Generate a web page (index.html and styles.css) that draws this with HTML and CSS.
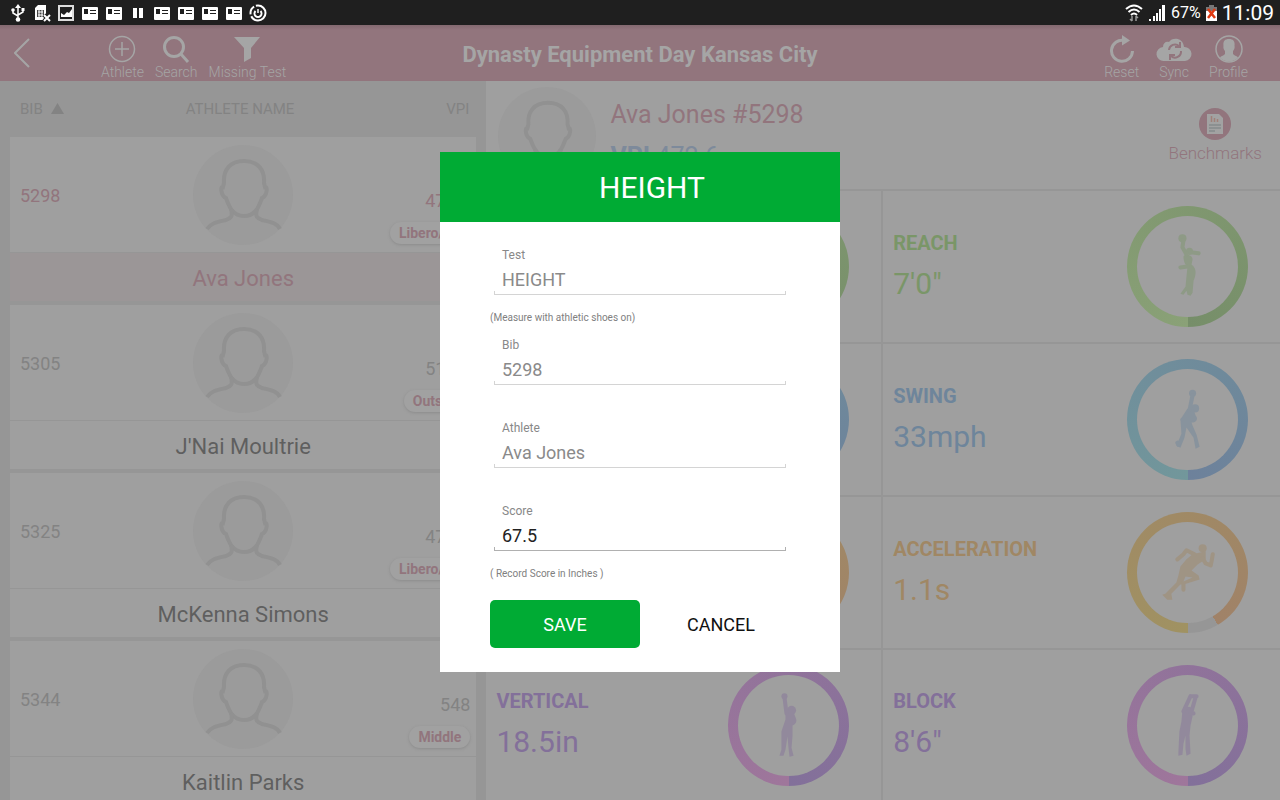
FILE: index.html
```
<!DOCTYPE html>
<html lang="en">
<head>
    <meta charset="UTF-8">
    <meta name="viewport" content="width=device-width, initial-scale=1">
    <title>Dynasty Equipment Day Kansas City</title>
    <link rel="stylesheet" href="styles.css">
</head>
<body>
    <!-- shared shapes -->
    <svg class="defs" width="0" height="0" aria-hidden="true">
        <symbol id="avatar" viewBox="0 0 100 100">
            <circle cx="50" cy="50" r="50" fill="#9b9b9b"/>
            <g fill="none" stroke="#919191" stroke-width="4">
                <path d="M51 16C37 16 30 25 31 38L30 42C27 41 28 51 33 53C36 61 39 71 51 71C63 71 66 61 69 53C74 51 75 41 72 42L71 38C72 25 65 16 51 16Z"/>
                <path d="M38 64C40 72 38 73 33 75C24 77 18 78 14 84M64 64C62 72 64 73 69 75C78 77 84 78 87 84"/>
            </g>
        </symbol>
        <symbol id="news" viewBox="0 0 18 18">
            <rect x="1" y="3" width="16" height="13" rx="1" fill="#fff"/>
            <path d="M3 5h4v5H3zM9 6h6v1H9zM9 9h6v1H9z" fill="#1f1f1f"/>
        </symbol>
    </svg>

    <div class="status-bar">
        <div class="status-icons">
            <svg viewBox="0 0 18 18"><path d="M9 3v12M4 6v3l5 3M14 5v3l-5 3" fill="none" stroke="#fff" stroke-width="1.5"/><path d="M9 0l3 4H6z" fill="#fff"/><circle cx="9" cy="15.500" r="2.300" fill="#fff"/><circle cx="4" cy="6" r="1.800" fill="#fff"/><path d="M12.500 4h3v3h-3z" fill="#fff"/></svg>
            <svg viewBox="0 0 18 18"><path d="M5 1h8v9l-1 6H2V4z" fill="#fff"/><path d="M4 6h7v7H4z" fill="#444"/><path d="M5 8h5M5 11h5M6 6v7M9 6v7" stroke="#fff"/><path d="M11 11l6 6M17 11l-6 6" stroke="#1f1f1f" stroke-width="4"/><path d="M11 11l6 6M17 11l-6 6" stroke="#fff" stroke-width="2"/></svg>
            <svg viewBox="0 0 18 18"><path d="M2 2h14v14H2z" fill="none" stroke="#ddd" stroke-width="2"/><path d="M4 13V9l3 2 3-3 2 1 3-4v8z" fill="#fff"/></svg>
            <svg><use href="#news"/></svg>
            <svg><use href="#news"/></svg>
            <svg viewBox="0 0 18 18"><path d="M4 4h4v10H4zM10 4h4v10h-4z" fill="#fff"/></svg>
            <svg><use href="#news"/></svg>
            <svg><use href="#news"/></svg>
            <svg><use href="#news"/></svg>
            <svg><use href="#news"/></svg>
            <svg viewBox="0 0 18 18" fill="none" stroke="#fff"><circle cx="9" cy="9" r="7.500" stroke-width="2" stroke-dasharray="20 2 9 2"/><path d="M6.500 7a3.500 3.500 0 1 0 5 0" stroke-width="2"/><path d="M9 5v4" stroke-width="1.500"/></svg>
        </div>
        <div class="status-info">
            <svg width="18" height="18" viewBox="0 0 18 18"><path d="M1 5q8-7 16 0M3.500 8q5.500-5 11 0M6 11q3-3 6 0" fill="none" stroke="#fff" stroke-width="2"/><path d="M7 12v5M5 15l2 2M11 17v-5M13 14l-2-2" fill="none" stroke="#999" stroke-width="1.500"/></svg>
            <svg width="18" height="18" viewBox="0 0 18 18" fill="#fff"><path d="M1 15h2v2H1zM5 12h2v5H5zM8 9h2v8H8zM11 5h2v12h-2zM14 1h3v16h-3z"/></svg>
            <span class="battery-level">67%</span>
            <svg width="11" height="18" viewBox="0 0 11 18"><path d="M3 1h5v2h3v4H0V3h3z" fill="#777"/><path d="M0 7h11v10H0z" fill="#fff"/><path d="M2 5l7 9M9 5l-7 9" stroke="#e03a12" stroke-width="2.500"/></svg>
            <span class="clock">11:09</span>
        </div>
    </div>

    <div class="app">
        <header class="toolbar">
            <nav class="tools">
                <button class="back" aria-label="Back">
                    <svg width="16" height="30" viewBox="0 0 16 30" fill="none" stroke="currentColor" stroke-width="2"><path d="M15 1L1 15l14 14"/></svg>
                </button>
                <button class="tool">
                    <svg width="28" height="28" viewBox="0 0 28 28" fill="none" stroke="currentColor"><circle cx="14" cy="14" r="12.500" stroke-width="1.500"/><path d="M14 7v14M7 14h14" stroke-width="1.500"/></svg>
                    Athlete
                </button>
                <button class="tool">
                    <svg width="28" height="28" viewBox="0 0 28 28" fill="none" stroke="currentColor" stroke-width="3"><circle cx="12" cy="12" r="9.500"/><path d="M18.500 18.500L26 27"/></svg>
                    Search
                </button>
                <button class="tool">
                    <svg width="28" height="28" viewBox="0 0 28 28" fill="currentColor"><path d="M1 2h26L18 13v10l-7 4V13z"/></svg>
                    Missing Test
                </button>
            </nav>
            <h1>Dynasty Equipment Day Kansas City</h1>
            <div class="tools tools-right">
                <button class="tool">
                    <svg width="28" height="28" viewBox="0 0 28 28"><path d="M16 5.500A10.500 10.500 0 1 0 24.500 16" fill="none" stroke="currentColor" stroke-width="3"/><path d="M14 0l8 5.500-8 5z" fill="currentColor"/></svg>
                    Reset
                </button>
                <button class="tool">
                    <svg width="36" height="28" viewBox="0 0 36 28"><path d="M8 26a7 7 0 0 1-1-14C7 8 10 6 13 7C16 2 27 2 28 12a7 7 0 0 1 1 14z" fill="currentColor"/><g fill="none" stroke="#92757d" stroke-width="2"><path d="M13 15a6 6 0 0 1 10-4M25 16a6 6 0 0 1-10 5"/><path d="M24 7v5h-5M14 25v-5h5"/></g></svg>
                    Sync
                </button>
                <button class="tool">
                    <svg width="28" height="28" viewBox="0 0 28 28"><circle cx="14" cy="14" r="13" fill="none" stroke="currentColor" stroke-width="1.500"/><path d="M14 4C9 4 8 7 8.500 11C8 13 9 15 10 16v3C8 21 6 21 5 22.500A12 12 0 0 0 23 22.500C22 21 20 21 18 19v-3C19 15 20 13 19.500 11C20 7 19 4 14 4Z" fill="currentColor"/></svg>
                    Profile
                </button>
            </div>
        </header>

        <main class="content">
            <section class="athletes">
                <div class="columns">
                    <span>BIB <svg width="13" height="11" viewBox="0 0 13 11"><path d="M6.500 0L13 11H0z" fill="currentColor"/></svg></span>
                    <span>ATHLETE NAME</span>
                    <span>VPI</span>
                </div>
                <ul class="cards">
                    <li class="card selected">
                        <div class="card-top">
                            <span class="bib">5298</span>
                            <svg class="photo"><use href="#avatar"/></svg>
                            <div class="score"><span>472.6</span><span class="badge">Libero/DS</span></div>
                        </div>
                        <div class="name">Ava Jones</div>
                    </li>
                    <li class="card">
                        <div class="card-top">
                            <span class="bib">5305</span>
                            <svg class="photo"><use href="#avatar"/></svg>
                            <div class="score"><span>510.2</span><span class="badge">Outside</span></div>
                        </div>
                        <div class="name">J'Nai Moultrie</div>
                    </li>
                    <li class="card">
                        <div class="card-top">
                            <span class="bib">5325</span>
                            <svg class="photo"><use href="#avatar"/></svg>
                            <div class="score"><span>474.1</span><span class="badge">Libero/DS</span></div>
                        </div>
                        <div class="name">McKenna Simons</div>
                    </li>
                    <li class="card">
                        <div class="card-top">
                            <span class="bib">5344</span>
                            <svg class="photo"><use href="#avatar"/></svg>
                            <div class="score"><span>548</span><span class="badge">Middle</span></div>
                        </div>
                        <div class="name">Kaitlin Parks</div>
                    </li>
                </ul>
            </section>

            <section class="detail">
                <div class="detail-head">
                    <svg class="photo"><use href="#avatar"/></svg>
                    <div class="who">
                        <h2>Ava Jones #5298</h2>
                        <p><b>VPI</b> 472.6</p>
                    </div>
                    <button class="benchmarks">
                        <svg width="34" height="34" viewBox="0 0 34 34"><circle cx="17" cy="17" r="16" fill="#92757d"/><path d="M9 7h12l4 4v16H9z" fill="#a2a2a2"/><path d="M13.500 9v6M16.500 11v4M19.500 12v3" stroke="#a08078" stroke-width="1.500"/><path d="M11 18h12M11 21h12M11 24h6" stroke="#858a8c" stroke-width="1.500"/></svg>
                        Benchmarks
                    </button>
                </div>

                <div class="tests">
                    <div class="test green"><div class="ring"><div class="ring-hole"></div></div></div>
                    <div class="test green">
                        <div class="result"><h3>REACH</h3><p>7'0"</p></div>
                        <div class="ring"><div class="ring-hole">
                            <svg class="figure" viewBox="0 0 100 100">
                                <circle cx="45" cy="22" r="4"/>
                                <circle cx="52" cy="35" r="3.500"/>
                                <path d="M46 40C47 37 55 38 55 43L54 48C60 52 58 60 56 64L55 76L53 79L50 78L49 74L46 78L43 77L48 70L49 60L50 50C47 48 46 43 46 40Z"/>
                                <path class="limb" d="M46 24L45 31L49 38M53 36L61 37M50 50L43 51"/>
                            </svg>
                        </div></div>
                    </div>
                    <div class="test blue"><div class="ring"><div class="ring-hole"></div></div></div>
                    <div class="test blue">
                        <div class="result"><h3>SWING</h3><p>33mph</p></div>
                        <div class="ring"><div class="ring-hole">
                            <svg class="figure" viewBox="0 0 100 100">
                                <circle cx="55" cy="24" r="3.500"/>
                                <circle cx="57.500" cy="39" r="4"/>
                                <path d="M50 39L56 40L58 46C61 49 59 53 54 53L55 56L59 65L62 77L58 79L56 68L49 58L47 68L43 78L39 76L44 64L43 50Z"/>
                                <path class="limb" d="M55 26L52 41M41 75L40 73M45 50L53 50"/>
                            </svg>
                        </div></div>
                    </div>
                    <div class="test orange"><div class="ring"><div class="ring-hole"></div></div></div>
                    <div class="test orange">
                        <div class="result"><h3>ACCELERATION</h3><p>1.1s</p></div>
                        <div class="ring ring-partial"><div class="ring-hole">
                            <svg class="figure" viewBox="0 0 100 100">
                                <circle cx="65" cy="26" r="4"/>
                                <path d="M55 32L68 29L68 37L60 42L54 48L61 53L62 57L46 62L43 62L34 71L35 77L30 77L25 72L28 71L39 60L41 53L43 44L49 37Z"/>
                                <path class="limb" d="M57 32L49 28L46 32L40 37M65 36L68 41L73 43L74 38L75 32M46 60L46 67"/>
                                <path d="M48 54L55 55L46 59Z" fill="#9f9f9f"/>
                            </svg>
                        </div></div>
                    </div>
                    <div class="test purple">
                        <div class="result"><h3>VERTICAL</h3><p>18.5in</p></div>
                        <div class="ring"><div class="ring-hole">
                            <svg class="figure" viewBox="0 0 100 100">
                                <circle cx="46" cy="21" r="3"/>
                                <circle cx="53" cy="35" r="4.500"/>
                                <path d="M47 34L55 37L57 42C59 46 57 49 54 50L54 60L53 72L55 80L51 81L50 72L49 61L47 74L45 80L41 80L43 74L43 56L47 44Z"/>
                                <path class="limb" d="M46 22L48 38"/>
                            </svg>
                        </div></div>
                    </div>
                    <div class="test purple">
                        <div class="result"><h3>BLOCK</h3><p>8'6"</p></div>
                        <div class="ring"><div class="ring-hole">
                            <svg class="figure" viewBox="0 0 100 100">
                                <circle cx="51" cy="35" r="3.500"/>
                                <path d="M45 35L54 34L55 41L53 50L52 60L53 78L49 80L48 73L48 60L46 68L45 79L41 80L41 76L42 56L44 46Z"/>
                                <path class="limb" d="M53 21L46 36M58 22L54 36M53 21L59 21M53 38L56 38"/>
                            </svg>
                        </div></div>
                    </div>
                </div>
            </section>
        </main>

        <div class="overlay">
            <form class="dialog" role="dialog" aria-labelledby="dialogTitle">
                <h2 class="dialog-title" id="dialogTitle">HEIGHT</h2>
                <div class="dialog-body">
                    <div class="field">
                        <label for="test">Test</label>
                        <input type="text" id="test" value="HEIGHT" readonly>
                    </div>
                    <p class="hint">(Measure with athletic shoes on)</p>
                    <div class="field spaced">
                        <label for="bib">Bib</label>
                        <input type="text" id="bib" value="5298" readonly>
                    </div>
                    <div class="field spaced">
                        <label for="athlete">Athlete</label>
                        <input type="text" id="athlete" value="Ava Jones" readonly>
                    </div>
                    <div class="field">
                        <label for="score">Score</label>
                        <input type="text" id="score" class="active" value="67.5" inputmode="decimal">
                    </div>
                    <p class="hint">( Record Score in Inches )</p>
                    <div class="actions">
                        <button type="button" class="save">SAVE</button>
                        <button type="button" class="cancel">CANCEL</button>
                    </div>
                </div>
            </form>
        </div>
    </div>
</body>
</html>
```
FILE: styles.css
```
* {
    box-sizing: border-box;
}

body {
    margin: 0;
    height: 100vh;
    display: flex;
    flex-direction: column;
    overflow: hidden;
    font-family: Roboto, Arial, sans-serif;
    background: #9f9f9f;
}

h1, h2, h3, p, ul {
    margin: 0;
    padding: 0;
}

button {
    padding: 0;
    border: none;
    background: none;
    font-family: inherit;
    cursor: pointer;
}

.defs {
    position: absolute;
}

/* status bar */
.status-bar {
    flex: none;
    height: 25px;
    padding: 0 6px 0 9px;
    display: flex;
    justify-content: space-between;
    align-items: center;
    background: #1f1f1f;
    color: #fff;
}

.status-icons,
.status-info {
    display: flex;
    align-items: center;
    gap: 6px;
}

.status-icons svg {
    width: 18px;
    height: 18px;
}

.status-info {
    gap: 5px;
}

.battery-level {
    font-size: 16px;
}

.clock {
    font-size: 21px;
    line-height: 24px;
}

/* toolbar */
.app {
    flex: 1;
    min-height: 0;
    position: relative;
    display: flex;
    flex-direction: column;
}

.toolbar {
    flex: none;
    height: 56px;
    padding: 0 14px;
    display: grid;
    grid-template-columns: 1fr auto 1fr;
    align-items: center;
    background: linear-gradient(#836970, #92757d 5px);
    color: #a5a5a5;
}

.toolbar h1 {
    padding-top: 4px;
    font-size: 22px;
    font-weight: 700;
    line-height: 28px;
}

.tools {
    display: flex;
    align-items: center;
    gap: 11px;
}

.tools-right {
    justify-content: flex-end;
    gap: 20px;
    padding-right: 18px;
}

.back {
    margin-right: 60px;
    color: inherit;
    line-height: 0;
}

.tool {
    padding-top: 9px;
    display: flex;
    flex-direction: column;
    align-items: center;
    color: inherit;
    font-size: 14px;
    font-weight: 300;
    line-height: 18px;
}

.tools-right svg {
    margin: 0 -4px;
}

.content {
    flex: 1;
    min-height: 0;
    display: flex;
}

/* athlete list */
.athletes {
    width: 38%;
    padding: 0 10px;
    overflow: hidden;
    background: #969696;
    color: #838383;
}

.columns {
    height: 56px;
    padding: 0 7px 0 10px;
    display: grid;
    grid-template-columns: 1fr 118px 1fr;
    align-items: center;
    font-size: 15px;
}

.columns svg {
    margin-left: 4px;
}

.columns span:last-child {
    text-align: right;
}

.cards {
    list-style: none;
    display: grid;
    gap: 4px;
}

.card {
    background: #9f9f9f;
}

.card-top {
    height: 116px;
    padding: 0 10px;
    display: grid;
    grid-template-columns: 1fr 100px 1fr;
    align-items: center;
    border-bottom: 1px solid #969696;
    font-size: 18px;
}

.bib {
    padding-top: 2px;
}

.photo {
    width: 100px;
    height: 100px;
}

.score {
    display: flex;
    flex-direction: column;
    align-items: flex-end;
    gap: 11px;
    margin-right: -4px;
    padding-top: 44px;
}

.badge {
    padding: 0 9px;
    border-radius: 11px;
    background: #a1a1a1;
    box-shadow: 0 1px 3px #8c8c8c;
    color: #92757d;
    font-size: 14px;
    font-weight: 700;
    line-height: 22px;
}

.name {
    height: 48px;
    color: #5f5f5f;
    font-size: 22px;
    line-height: 52px;
    text-align: center;
}

.selected,
.selected .name {
    color: #92757d;
}

.selected .name {
    background: #9b9697;
}

/* athlete detail */
.detail {
    flex: 1;
    display: flex;
    flex-direction: column;
    background: #9f9f9f;
}

.detail-head {
    flex: none;
    height: 110px;
    padding: 2px 18px 0 12px;
    display: flex;
    align-items: center;
    gap: 14px;
    border-bottom: 2px solid #969696;
}

.detail-head .photo {
    width: 98px;
    height: 98px;
}

.who {
    flex: 1;
    font-size: 25px;
    line-height: 42px;
}

.who h2 {
    color: #92757d;
    font-size: 25px;
    font-weight: 400;
}

.who p {
    color: #7d8a9b;
}

.benchmarks {
    display: flex;
    flex-direction: column;
    align-items: center;
    color: #92757d;
    font-size: 17px;
    font-weight: 300;
    line-height: 24px;
}

.tests {
    flex: 1;
    display: grid;
    grid-template-columns: 1fr 1fr;
    grid-template-rows: repeat(3, 153px) 1fr;
}

.test {
    padding: 0 32px 0 10px;
    display: flex;
    align-items: center;
    border-bottom: 2px solid #969696;
}

.test:nth-child(odd) {
    border-right: 2px solid #969696;
}

.test:nth-last-child(-n+2) {
    border-bottom: none;
}

.result h3 {
    margin-bottom: 10px;
    font-size: 20px;
    font-weight: 700;
    line-height: 24px;
}

.result p {
    font-size: 30px;
    line-height: 38px;
}

.ring {
    width: 121px;
    height: 121px;
    margin-left: auto;
    padding: 10px;
    border-radius: 50%;
    background: conic-gradient(from 180deg, var(--from), var(--to));
}

.ring-partial {
    background: conic-gradient(from 180deg, var(--from), var(--to) 330deg, #969696 330deg);
}

.ring-hole {
    height: 101px;
    border-radius: 50%;
    background: #9f9f9f;
}

.figure {
    display: block;
    fill: currentColor;
    opacity: 0.45;
}

.limb {
    fill: none;
    stroke: currentColor;
    stroke-width: 4;
    stroke-linecap: round;
    stroke-linejoin: round;
}

.green {
    --from: #8aa177;
    --to: #768e69;
    color: #7a9668;
}

.blue {
    --from: #72979b;
    --to: #6d819b;
    color: #6e859b;
}

.orange {
    --from: #a09262;
    --to: #a08268;
    color: #a08764;
}

.purple {
    --from: #9f769b;
    --to: #82709a;
    color: #83709a;
}

/* score dialog */
.overlay {
    position: absolute;
    inset: 0;
    display: flex;
    align-items: center;
    justify-content: center;
    padding-bottom: 1px;
}

.dialog {
    width: 400px;
    background: #fff;
}

.dialog-title {
    height: 70px;
    padding-left: 24px;
    background: #00ab34;
    color: #fff;
    font-size: 30px;
    font-weight: 400;
    line-height: 72px;
    text-align: center;
}

.dialog-body {
    padding: 24px 50px;
}

.field {
    padding: 0 4px;
}

.spaced {
    margin-bottom: 34px;
}

.field label {
    display: block;
    padding-left: 8px;
    color: #888;
    font-size: 12px;
    line-height: 18px;
}

.field input {
    --line: #d4d4d4;
    display: block;
    width: 100%;
    height: 31px;
    padding: 0 8px;
    border: none;
    border-bottom: 1px solid var(--line);
    border-radius: 0;
    outline: none;
    /* short ticks at both ends of the underline */
    background:
        linear-gradient(var(--line), var(--line)) left bottom / 1px 3px no-repeat,
        linear-gradient(var(--line), var(--line)) right bottom / 1px 3px no-repeat;
    color: #8a8a8a;
    font-family: inherit;
    font-size: 18px;
}

.field input.active {
    --line: #b0b0b0;
    color: #222;
}

.hint {
    margin: 16px 0 11px;
    color: #808080;
    font-size: 10px;
    line-height: 14px;
}

.actions {
    padding-top: 8px;
    display: grid;
    grid-template-columns: 1fr 1fr;
}

.actions button {
    height: 48px;
    border-radius: 5px;
    font-size: 18px;
}

.save {
    background: #00ab34;
    color: #fff;
}

.cancel {
    padding-left: 12px;
    color: #111;
}
```
